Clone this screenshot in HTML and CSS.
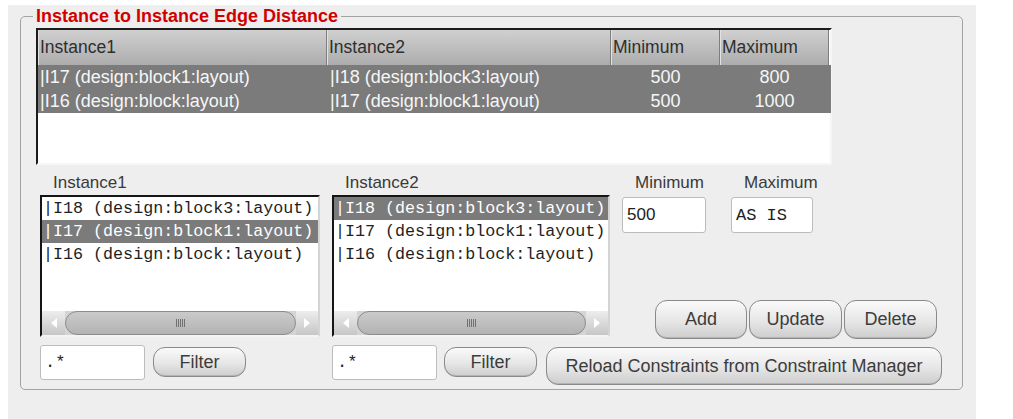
FILE: index.html
```html
<!DOCTYPE html>
<html>
<head>
<meta charset="utf-8">
<link rel="stylesheet" href="styles.css">
</head>
<body>
<div class="window">
  <fieldset class="group">
    <legend class="title">Instance to Instance Edge Distance</legend>

    <div class="table">
      <div class="thead">
        <div class="th">Instance1</div>
        <div class="th">Instance2</div>
        <div class="th">Minimum</div>
        <div class="th">Maximum</div>
      </div>
      <div class="tr">
        <div class="td c1">|I17 (design:block1:layout)</div>
        <div class="td c2">|I18 (design:block3:layout)</div>
        <div class="td num">500</div>
        <div class="td num">800</div>
      </div>
      <div class="tr">
        <div class="td c1">|I16 (design:block:layout)</div>
        <div class="td c2">|I17 (design:block1:layout)</div>
        <div class="td num">500</div>
        <div class="td num">1000</div>
      </div>
    </div>

    <div class="middle">
      <div class="listcol first">
        <div class="label">Instance1</div>
        <div class="listbox">
          <div class="items">
            <div class="item">|I18 (design:block3:layout)</div>
            <div class="item sel">|I17 (design:block1:layout)</div>
            <div class="item">|I16 (design:block:layout)</div>
          </div>
          <div class="hscroll">
            <div class="arrow left"></div>
            <div class="thumb"><span class="grip"></span></div>
            <div class="arrow right"></div>
          </div>
        </div>
      </div>

      <div class="listcol second">
        <div class="label">Instance2</div>
        <div class="listbox">
          <div class="items">
            <div class="item sel">|I18 (design:block3:layout)</div>
            <div class="item">|I17 (design:block1:layout)</div>
            <div class="item">|I16 (design:block:layout)</div>
          </div>
          <div class="hscroll">
            <div class="arrow left"></div>
            <div class="thumb"><span class="grip"></span></div>
            <div class="arrow right"></div>
          </div>
        </div>
      </div>

      <div class="editcol">
        <div class="fields">
          <div class="label">Minimum</div>
          <div class="label">Maximum</div>
          <input class="field-input" type="text" value="500">
          <input class="field-input mono" type="text" value="AS IS">
        </div>
        <div class="buttons">
          <button class="btn btn-act">Add</button>
          <button class="btn btn-act">Update</button>
          <button class="btn btn-act">Delete</button>
        </div>
      </div>
    </div>

    <div class="bottom">
      <div class="filtergroup first">
        <input class="field-input mono filter-input" type="text" value=".*">
        <button class="btn btn-filter">Filter</button>
      </div>
      <div class="filtergroup second">
        <input class="field-input mono filter-input" type="text" value=".*">
        <button class="btn btn-filter">Filter</button>
        <button class="btn btn-reload">Reload Constraints from Constraint Manager</button>
      </div>
    </div>
  </fieldset>
</div>
</body>
</html>
```

FILE: styles.css
```css
* { box-sizing: border-box; }

html, body {
  margin: 0;
  padding: 0;
  background: #ffffff;
}

body {
  font-family: "Liberation Sans", Arial, sans-serif;
  color: #333333;
}

.window {
  width: 968px;
  height: 414px;
  margin: 5px 0 0 8px;
  padding: 2px 0 0 12px;
  background: #eeeeee;
  overflow: hidden;
}

.group {
  width: 943px;
  min-width: 0;
  margin: 0;
  padding: 3px 0 4px 15px;
  border: 1px solid #a3a3a3;
  border-radius: 5px;
}

.title {
  margin-left: -3px;
  padding: 0 3px;
  font-family: "Liberation Sans", Arial, sans-serif;
  font-weight: bold;
  font-size: 18px;
  line-height: 18px;
  color: #d10000;
}

/* ---------- table ---------- */
.table {
  width: 796px;
  height: 137px;
  border: 2px solid;
  border-color: #1c1c1c #f6f6f6 #f6f6f6 #1c1c1c;
  background: #ffffff;
}

.thead, .tr {
  display: grid;
  grid-template-columns: 289px 284px 109px 109px;
}

.thead { height: 35px; }

.th {
  background: linear-gradient(#d0d0d0, #acacac);
  border-left: 1px solid #e2e2e2;
  border-right: 1px solid #7e7e7e;
  padding-left: 1px;
  font-size: 17.5px;
  line-height: 35px;
  color: #2e2e2e;
  white-space: nowrap;
}

.tr {
  height: 24px;
  background: #7b7b7b;
  color: #f6f6f6;
  font-size: 18px;
  line-height: 24px;
  margin-right: -1px;
}

.td { white-space: nowrap; }
.td.c1 { padding-left: 2px; }
.td.c2 { padding-left: 3px; }
.td.num { text-align: center; }

/* ---------- middle ---------- */
.middle {
  display: flex;
  align-items: flex-start;
  gap: 12px;
  margin-top: 6px;
  padding-left: 4px;
}

.listcol.first { width: 280px; }
.listcol.second { width: 278px; }

.label {
  font-size: 17px;
  line-height: 24px;
  padding-left: 13px;
  color: #3a3a3a;
  white-space: nowrap;
}

.listbox {
  height: 142px;
  display: flex;
  flex-direction: column;
  border: 2px solid;
  border-color: #151515 #d4d4d4 #f4f4f4 #151515;
  background: #ffffff;
}

.items { flex: 1; }

.item {
  font-family: "Liberation Mono", "Courier New", monospace;
  font-size: 16.7px;
  line-height: 23px;
  padding-left: 1px;
  color: #1e1e1e;
  white-space: nowrap;
}

.item.sel {
  background: #7b7b7b;
  color: #ffffff;
}

.hscroll {
  height: 24px;
  display: grid;
  grid-template-columns: 23px 1fr 22px;
  background: #d4d4d4;
}

.arrow {
  display: flex;
  align-items: center;
  justify-content: center;
  background: linear-gradient(#ededed, #c6c6c6);
}

.arrow::before {
  content: "";
  width: 0;
  height: 0;
  border-top: 5px solid transparent;
  border-bottom: 5px solid transparent;
}

.arrow.left::before { border-right: 6px solid #ffffff; }
.arrow.right::before { border-left: 6px solid #ffffff; }

.thumb {
  display: flex;
  align-items: center;
  justify-content: center;
  border: 1px solid #8c8c8c;
  border-radius: 12px;
  background: linear-gradient(#cacaca, #b3b3b3);
}

.grip {
  width: 9px;
  height: 8px;
  background: repeating-linear-gradient(90deg, #707070 0 1px, transparent 1px 2px);
}

/* ---------- edit column ---------- */
.editcol {
  width: 320px;
  display: flex;
  flex-direction: column;
}

.fields {
  display: grid;
  grid-template-columns: 84px 82px;
  column-gap: 25px;
}

.field-input {
  height: 36px;
  margin: 2px 0 0 0;
  padding: 0 0 0 4px;
  border: 1px solid #bcbcbc;
  border-radius: 3px;
  background: #ffffff;
  font-family: "Liberation Sans", Arial, sans-serif;
  font-size: 17px;
  color: #222222;
  outline: none;
  width: 100%;
}

.field-input.mono {
  font-family: "Liberation Mono", "Courier New", monospace;
}

.buttons {
  display: flex;
  justify-content: flex-end;
  gap: 2px;
  padding-right: 5px;
  margin-top: 67px;
}

.btn {
  padding: 0;
  border: 1px solid #8a8a8a;
  border-radius: 12px;
  background: linear-gradient(#fafafa, #e6e6e6 55%, #cdcdcd);
  box-shadow: inset 0 -1px 0 #b4b4b4;
  font-family: "Liberation Sans", Arial, sans-serif;
  font-size: 18px;
  color: #3c3c3c;
  white-space: nowrap;
}

.btn-act {
  width: 93px;
  height: 39px;
}

.btn-act:first-child { width: 92px; }

/* ---------- bottom ---------- */
.bottom {
  display: flex;
  align-items: flex-start;
  gap: 12px;
  margin-top: 6px;
  padding-left: 4px;
}

.filtergroup {
  display: flex;
  align-items: flex-start;
}

.filtergroup.first { width: 280px; gap: 8px; }
.filtergroup.second { gap: 7px; }

.filter-input {
  width: 105px;
  height: 35px;
  margin-top: 0;
}

.btn-filter {
  width: 93px;
  height: 30px;
  margin-top: 2px;
}

.btn-reload {
  width: 396px;
  height: 38px;
  margin-top: 2px;
  margin-left: 2px;
}
```
